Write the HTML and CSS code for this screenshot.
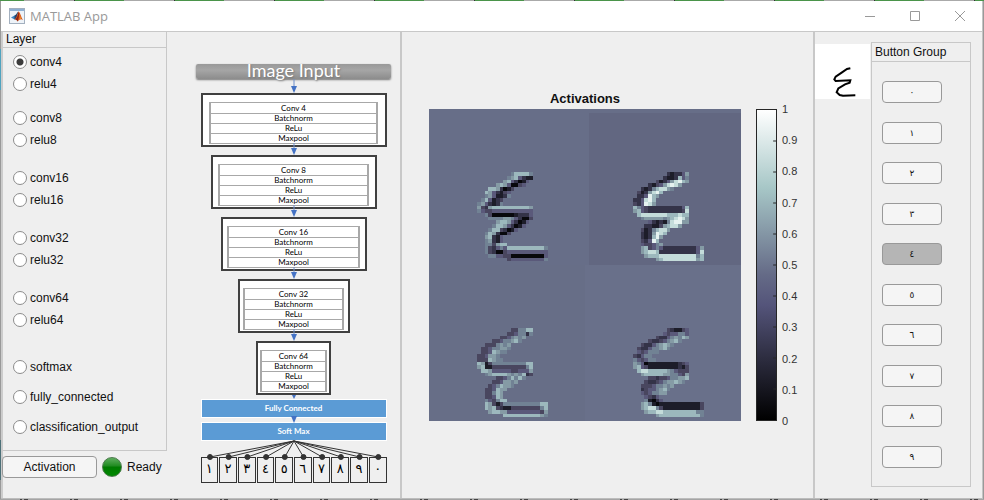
FILE: index.html
```html
<!DOCTYPE html>
<html lang="en">
<head>
<meta charset="utf-8">
<title>MATLAB App</title>
<link rel="stylesheet" href="styles.css">
</head>
<body>
<div class="window">
  <header class="titlebar">
    <svg class="logo" viewBox="0 0 16 16" aria-hidden="true">
      <rect x=".5" y=".5" width="15" height="15" fill="#eef3f8" stroke="#a3b0bf"/>
      <rect x="1" y="1" width="14" height="2" fill="#8fb0d3"/>
      <path d="M2 9.500 5.500 7.500 7.500 10 5.500 11.500z" fill="#3c86c4"/>
      <path d="M5.500 7.500C7.500 7 8 4 9.500 3.500L7.500 10.500 5.500 11.500z" fill="#25476f"/>
      <path d="M9.500 3.500C11 4 12 9 14 12 12 10.800 11 11 8.500 13.500 8 12 7.500 11.500 5.500 11.500 8 10 8.500 5 9.500 3.500z" fill="#d9541a"/>
      <path d="M9.500 4C10.500 6 10 10 8.500 13.500 8 12 7 11.500 6 11.500 9 9.500 9 6 9.500 4z" fill="#8e2413"/>
      <path d="M10.300 5.500C11 8 11 10 10.300 11.500L12 10.500z" fill="#f5a32a"/>
    </svg>
    <h1>MATLAB App</h1>
    <button class="winbtn" aria-label="Minimize"><svg viewBox="0 0 12 12"><path d="M1 6.500h10"/></svg></button>
    <button class="winbtn" aria-label="Maximize"><svg viewBox="0 0 12 12"><path d="M1.500 1.500h9v9h-9z"/></svg></button>
    <button class="winbtn" aria-label="Close"><svg viewBox="0 0 12 12"><path d="M1 1l10 10M11 1L1 11"/></svg></button>
  </header>

  <main class="content">
    <section class="controls">
      <fieldset class="layers" aria-labelledby="layer-title">
        <h2 id="layer-title">Layer</h2>
        <div class="pair first">
          <label><input type="radio" name="layer" checked>conv4</label>
          <label><input type="radio" name="layer">relu4</label>
        </div>
        <div class="pair">
          <label><input type="radio" name="layer">conv8</label>
          <label><input type="radio" name="layer">relu8</label>
        </div>
        <div class="pair">
          <label><input type="radio" name="layer">conv16</label>
          <label><input type="radio" name="layer">relu16</label>
        </div>
        <div class="pair">
          <label><input type="radio" name="layer">conv32</label>
          <label><input type="radio" name="layer">relu32</label>
        </div>
        <div class="pair">
          <label><input type="radio" name="layer">conv64</label>
          <label><input type="radio" name="layer">relu64</label>
        </div>
        <div class="singles">
          <label><input type="radio" name="layer">softmax</label>
          <label><input type="radio" name="layer">fully_connected</label>
          <label><input type="radio" name="layer">classification_output</label>
        </div>
      </fieldset>
      <div class="actions">
        <button class="btn activate">Activation</button>
        <span class="lamp"></span>
        <span>Ready</span>
      </div>
    </section>

    <section class="network">
      <div class="input-bar">Image Input</div>
      <svg class="arrow tall" viewBox="0 0 8 14"><path d="M4 0v8"/><path class="head" d="M1 7h6l-3 7z"/></svg>
      <div class="block w1"><ul><li>Conv 4</li><li>Batchnorm</li><li>ReLu</li><li>Maxpool</li></ul></div>
      <svg class="arrow" viewBox="0 0 8 12"><path d="M4 0v6"/><path class="head" d="M1 5h6l-3 7z"/></svg>
      <div class="block w2"><ul><li>Conv 8</li><li>Batchnorm</li><li>ReLu</li><li>Maxpool</li></ul></div>
      <svg class="arrow" viewBox="0 0 8 12"><path d="M4 0v6"/><path class="head" d="M1 5h6l-3 7z"/></svg>
      <div class="block w3"><ul><li>Conv 16</li><li>Batchnorm</li><li>ReLu</li><li>Maxpool</li></ul></div>
      <svg class="arrow" viewBox="0 0 8 12"><path d="M4 0v6"/><path class="head" d="M1 5h6l-3 7z"/></svg>
      <div class="block w4"><ul><li>Conv 32</li><li>Batchnorm</li><li>ReLu</li><li>Maxpool</li></ul></div>
      <svg class="arrow" viewBox="0 0 8 12"><path d="M4 0v6"/><path class="head" d="M1 5h6l-3 7z"/></svg>
      <div class="block w5"><ul><li>Conv 64</li><li>Batchnorm</li><li>ReLu</li><li>Maxpool</li></ul></div>
      <svg class="arrow short" viewBox="0 0 8 4"><path class="head" d="M2 0h4l-2 4z"/></svg>
      <div class="stage">Fully Connected</div>
      <svg class="arrow short" viewBox="0 0 8 4"><path class="head" d="M1 -2h6l-3 7z"/></svg>
      <div class="stage">Soft Max</div>
      <svg class="fan" viewBox="0 0 186 20" id="fan"></svg>
      <ol class="classes" lang="ar"><li>١</li><li>٢</li><li>٣</li><li>٤</li><li>٥</li><li>٦</li><li>٧</li><li>٨</li><li>٩</li><li>٠</li></ol>
    </section>

    <section class="axes">
      <h2>Activations</h2>
      <div class="plot">
        <canvas id="map" width="84" height="84" aria-label="Activations"></canvas>
        <div class="colorbar">
          <svg viewBox="0 0 20 10" preserveAspectRatio="none"><path d="M17 1h3M17 2h3M17 3h3M17 4h3M17 5h3M17 6h3M17 7h3M17 8h3M17 9h3"/></svg>
        </div>
        <div class="scale"><span>1</span><span>0.9</span><span>0.8</span><span>0.7</span><span>0.6</span><span>0.5</span><span>0.4</span><span>0.3</span><span>0.2</span><span>0.1</span><span>0</span></div>
      </div>
    </section>

    <section class="picker">
      <svg class="sample" viewBox="0 0 165 165" role="img" aria-label="٤">
        <path d="M106 73L96 75 80 86 62 98 58 106 62 111 106 109 104 116 90 121 70 133 65 145 74 153 84 155 121 154"/>
      </svg>
      <div class="group">
        <h2>Button Group</h2>
        <div class="digits" lang="ar">
          <button class="btn">٠</button><button class="btn">١</button><button class="btn">٢</button><button class="btn">٣</button><button class="btn on" aria-pressed="true">٤</button><button class="btn">٥</button><button class="btn">٦</button><button class="btn">٧</button><button class="btn">٨</button><button class="btn">٩</button>
        </div>
      </div>
    </section>
  </main>
</div>
<script src="app.js"></script>
</body>
</html>
```
FILE: styles.css
```css
* { box-sizing: border-box; }
body {
  margin: 0;
  min-height: 100vh;
  display: flex;
  padding: 1px;
  font: 12px/16px "Liberation Sans", Arial, sans-serif;
  color: #111;
  background:
    repeating-linear-gradient(90deg, #4a944a 0 24px, #aaa 24px 74px, #333 74px 75px, #4a944a 75px 100px) top / 100% 1px no-repeat,
    repeating-linear-gradient(90deg, #a4a4a4 0 20px, #444 20px 22px, #a4a4a4 22px 24px, #444 24px 28px, #a4a4a4 28px 50px) bottom / 100% 1px no-repeat,
    linear-gradient(#999, #999) right / 1px 100% no-repeat,
    linear-gradient(#999 49px, #4fa3bf 49px 90px, #999 90px 440px, #4c7078 440px 480px, #999 480px);
}
h1, h2, ul, ol, fieldset { margin: 0; padding: 0; font: inherit; list-style: none; }
button { font: inherit; color: inherit; padding: 0; }
.window {
  flex: 1;
  display: flex;
  flex-direction: column;
  background: #efefef;
  border-right: 1px solid #c4c4c4;
  border-bottom: 1px solid #bcbcbc;
}
.titlebar {
  display: flex;
  align-items: center;
  height: 31px;
  padding-left: 8px;
  background: #fff;
  border-bottom: 1px solid #c8c8c8;
}
.logo { width: 16px; height: 16px; margin-right: 5px; }
h1 { flex: 1; font: 13px/20px "Open Sans", sans-serif; color: #999; }
.winbtn { width: 45px; height: 30px; border: 0; background: none; display: grid; place-items: center; }
.winbtn svg { width: 12px; height: 12px; fill: none; stroke: #999; }

.content { flex: 1; display: grid; grid-template-columns: 166px 233fr 415fr 167px; }
.controls { display: flex; flex-direction: column; border-left: 2px solid #ccc; }
.layers { border: solid #c8c8c8; border-width: 0 1px 1px 0; min-width: 0; padding-bottom: 12px; }
.layers h2 { height: 16px; line-height: 14px; padding-left: 3px; border-bottom: 1px solid #c8c8c8; margin-bottom: 3px; }
label { display: flex; align-items: center; gap: 3px; height: 22px; padding-left: 10px; }
.pair { margin-bottom: 16px; }
.pair.first { margin-bottom: 12px; }
.singles { display: grid; gap: 8px; padding-top: 9px; }
input[type="radio"] {
  appearance: none;
  width: 14px;
  height: 14px;
  margin: 0;
  border: 1px solid #8c8c8c;
  border-radius: 50%;
  background: #fff;
}
input[type="radio"]:checked { background: radial-gradient(circle, #3c3c3c 3px, #fff 4px); }
.actions { display: flex; align-items: center; gap: 5px; padding-top: 5px; }
.btn { background: #f5f5f5; border: 1px solid #999; border-radius: 4px; height: 22px; }
.activate { width: 95px; margin-left: -1px; }
.lamp {
  width: 20px;
  height: 20px;
  border-radius: 50%;
  border: 1px solid #4c7a4c;
  background: linear-gradient(#5fae5f, #1f8a1f 45%, #007a00 50%, #008800);
}

.network { display: flex; flex-direction: column; align-items: center; padding: 32px 0 0 20px; font: 8px/10px Lato, Carlito, sans-serif; color: #000; }
.input-bar {
  width: 195px;
  height: 15px;
  border-radius: 2px;
  background: linear-gradient(#999, #a6a6a6 40%, #8c8c8c);
  box-shadow: 0 1px 2px #777;
  color: #fff;
  font-size: 18px;
  line-height: 13px;
  text-align: center;
  text-shadow: 1px 1px 2px #777;
}
.arrow { width: 8px; height: 12px; margin-top: -4px; position: relative; z-index: 1; fill: none; stroke: #6f8fcb; overflow: visible; }
.arrow.tall { height: 14px; margin-top: 0; }
.arrow.short { height: 4px; margin-top: 0; }
.arrow .head { fill: #4472c4; stroke: none; }
.block { height: 54px; background: #fff; border: 2px solid #404040; padding-top: 7px; }
.block ul { width: 93%; margin: 0 auto; border: solid #a8a8a8; border-width: 1px 2px; }
.block li { height: 10px; line-height: 10px; text-align: center; }
.block li + li { border-top: 1px solid #a8a8a8; line-height: 9px; }
.w1 { width: 186px; }
.w2 { width: 166px; }
.w3 { width: 146px; }
.w4 { width: 112px; }
.w5 { width: 75px; }
.stage { width: 186px; height: 19px; border: 1px solid #fff; background: #5b9bd5; color: #fff; font-weight: bold; line-height: 16px; text-align: center; }
.fan { width: 186px; height: 20px; overflow: visible; stroke: #333; fill: #333; position: relative; z-index: 1; margin-bottom: -4px; }
.classes { display: grid; grid-template-columns: repeat(10, 1fr); gap: 1px; width: 186px; font: 13px/22px "DejaVu Sans", sans-serif; }
.classes li { height: 26px; border: 1px solid #333; text-align: center; }

.axes { border: solid #c8c8c8; border-width: 0 2px; padding: 59px 7px 0 27px; }
.axes h2 { font-size: 13px; font-weight: bold; width: 312px; max-width: 100%; text-align: center; line-height: 15px; margin-bottom: 3px; }
.plot { display: grid; grid-template-columns: 1fr 26px 24px; column-gap: 5px; }
canvas { display: block; width: 100%; aspect-ratio: 1; image-rendering: pixelated; }
.colorbar {
  width: 21px;
  justify-self: end;
  border: 1px solid #262626;
  background: linear-gradient(#fff, #a7c7c7 38%, #656b87 50%, #54547a 62%, #2d2d40 80%, #000);
  background: linear-gradient(#fff, #a7c7c7 25%, #656b87 53%, #54547a 63%, #2d2d40 80%, #000);
}
.plot { grid-template-columns: 1fr 31px 24px; }
.colorbar svg { display: block; width: 100%; height: 100%; stroke: #262626; }
.colorbar path { vector-effect: non-scaling-stroke; }
.scale { display: flex; flex-direction: column; justify-content: space-between; margin: -7px 0; font-size: 11px; line-height: 14px; color: #333; }

.picker { display: grid; grid-template-columns: 55px 100px; column-gap: 1px; padding: 10px 0 11px; align-items: start; }
.sample { width: 55px; height: 55px; margin-top: 2px; background: #fff; fill: none; stroke: #000; stroke-width: 6; }
.group { display: flex; flex-direction: column; height: 100%; border: 1px solid #c8c8c8; }
.group h2 { height: 19px; line-height: 18px; padding-left: 3px; border-bottom: 1px solid #c8c8c8; }
.digits { flex: 1; display: flex; flex-direction: column; justify-content: space-between; padding: 19px 28px 18px 10px; font: 9px/12px "DejaVu Sans", sans-serif; }
.btn.on { background: #b5b5b5; }
```
FILE: app.js
```js
// Bone colormap steps, from 0 (black) to 9 (near white).
const bone = ['#08080c', '#1d1d29', '#343348', '#49465f', '#5a597a', '#718294', '#859ba5', '#9cb8bd', '#c4dcda', '#e6f2f0'];

// Each tile holds 24 rows of 19 cells; a dot keeps the tile's background.
const tiles = [
  { x: 0, y: 0, w: 42, h: 42, bg: '#676e88', rows: `
.........577775....
........5674211....
.......6742014.....
.....67640034......
...7762013.........
..7642134..........
..5641125..........
.574123............
5642125............
632677777777776....
543344444444444....
..5300000012224....
...555566542003....
.....677642014.....
....577642014......
...57732014........
..5762003..........
..67214............
..56214............
..553677...........
..53245477777777775
..53200344444444444
...5544330000000004
........34444444445` },
  { x: 42, y: 0, w: 42, h: 42, bg: '#626781', rows: `
.........212246....
........2112745....
......312468976....
....213468986......
..212578865........
.3126897...........
.224976............
224897.............
324986.............
754322222222247....
674322222222238....
.78888888777877....
..5666665678986....
....42121589966....
...2211367886......
..31257886.........
..2126987..........
..212796...........
..32497............
..433456...........
..67345422222222246
..67887222222222248
...6777888888888857
......6788888888867` },
  { x: 0, y: 42, w: 42, h: 42, bg: '#676e87', rows: `
.........335577....
........3345525....
......3345656......
....33455675.......
..3335656..........
.33455665..........
.3347655...........
334665.............
3337655............
761355555555577....
671133333333357....
.77644444334446....
..5677776565723....
.....33457575......
....3346656........
...3457665.........
..334766...........
..33576............
..33476............
..543577...........
..76313555555555577
..76732113333333357
...6776644444444436
.......777777777765` },
  { x: 42, y: 42, w: 42, h: 42, bg: '#69708a', rows: `
.........321134....
........4344554....
......322456576....
....322345675......
..322456765........
.322455675.........
.434555............
32455..............
543455.............
654011111111234....
674311111111213....
.78877777654333....
..6777776655436....
....33233455667....
...32234566765.....
..333455656........
..23445675.........
..4345566..........
...4324............
...51024...........
..67510111111111113
..67885311111111113
...6778877777777755
......6777777777775` }
];

const ctx = document.getElementById('map').getContext('2d');
for (const t of tiles) {
  ctx.fillStyle = t.bg;
  ctx.fillRect(t.x, t.y, t.w, t.h);
  t.rows.trim().split('\n').forEach((row, r) => {
    [...row].forEach((c, i) => {
      if (c === '.') return;
      ctx.fillStyle = bone[c];
      ctx.fillRect(t.x + 13 + i, t.y + 17 + r, 1, 1);
    });
  });
}
ctx.fillStyle = '#676e88';
ctx.fillRect(42, 0, 1, 42);
ctx.fillRect(42, 0, 42, 1);

// Lines from the soft-max stage to each output class.
let fan = '';
for (let i = 0; i < 10; i++) {
  const x = 9 + i * 18.7;
  fan += `<path d="M93 0L${x} 16"/><circle cx="${x}" cy="16" r="2.5"/>`;
}
document.getElementById('fan').innerHTML = fan;
```
